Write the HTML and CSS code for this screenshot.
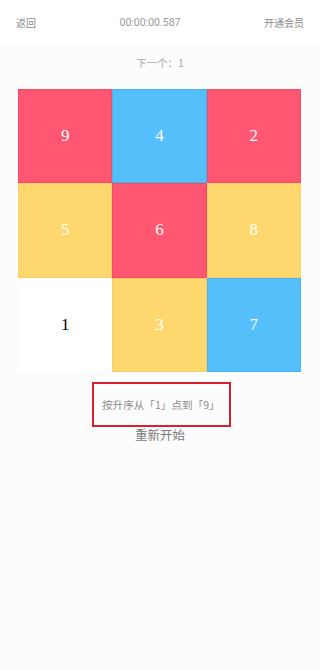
FILE: index.html
```html
<!DOCTYPE html>
<html>
<head>
<meta charset="utf-8">
<link rel="stylesheet" href="styles.css">
</head>
<body>
<div class="page">
  <header class="topbar">
    <span class="back">返回</span>
    <span class="timer">00:00:00.587</span>
    <span class="vip">开通会员</span>
  </header>
  <div class="next">下一个：1</div>
  <div class="grid">
    <div class="cell pink">9</div>
    <div class="cell blue">4</div>
    <div class="cell pink">2</div>
    <div class="cell yellow">5</div>
    <div class="cell pink">6</div>
    <div class="cell yellow">8</div>
    <div class="cell white">1</div>
    <div class="cell yellow">3</div>
    <div class="cell blue">7</div>
  </div>
  <div class="hint-wrap">
    <div class="hint">按升序从「1」点到「9」</div>
  </div>
  <div class="restart">重新开始</div>
</div>
</body>
</html>
```
FILE: styles.css
```css
html, body {
  margin: 0;
  padding: 0;
  background: #fcfcfc;
  font-family: "Noto Sans CJK SC", "Noto Sans", sans-serif;
}
.page {
  width: 320px;
  min-height: 670px;
  background: #fcfcfc;
}
.topbar {
  height: 44px;
  background: #ffffff;
  display: flex;
  align-items: center;
  justify-content: space-between;
  padding: 0 16px;
  font-size: 10px;
  color: #8a8a8a;
}
.timer {
  font-family: "Roboto", sans-serif;
  font-size: 10.5px;
  color: #9a9a9a;
}
.next {
  height: 36px;
  display: flex;
  align-items: center;
  justify-content: center;
  font-size: 10.5px;
  color: #a8a8a8;
}
.grid {
  margin: 9px 0 0 18px;
  width: 283px;
  height: 283px;
  display: grid;
  grid-template-columns: repeat(3, 1fr);
  grid-template-rows: repeat(3, 1fr);
}
.cell {
  display: flex;
  align-items: center;
  justify-content: center;
  font-family: "Liberation Serif", "DejaVu Serif", serif;
  font-size: 17px;
  color: #ffffff;
  box-sizing: border-box;
}
.pink {
  background: #ff5672;
  border: 1px solid #f24c69;
}
.blue {
  background: #54bffb;
  border: 1px solid #47b3f3;
}
.yellow {
  background: #fed86e;
  border: 1px solid #f6cf66;
}
.white {
  background: #ffffff;
  color: #000000;
}
.hint-wrap {
  display: flex;
  justify-content: center;
  margin-top: 10px;
}
.hint {
  width: 139px;
  height: 45px;
  box-sizing: border-box;
  border: 2px solid #d8202e;
  display: flex;
  align-items: center;
  padding-left: 8px;
  font-size: 10.6px;
  color: #8c8c8c;
  margin-left: 3px;
}
.restart {
  text-align: center;
  font-size: 12.5px;
  color: #7a7a7a;
  line-height: 18px;
  margin-top: -1px;
}
```
